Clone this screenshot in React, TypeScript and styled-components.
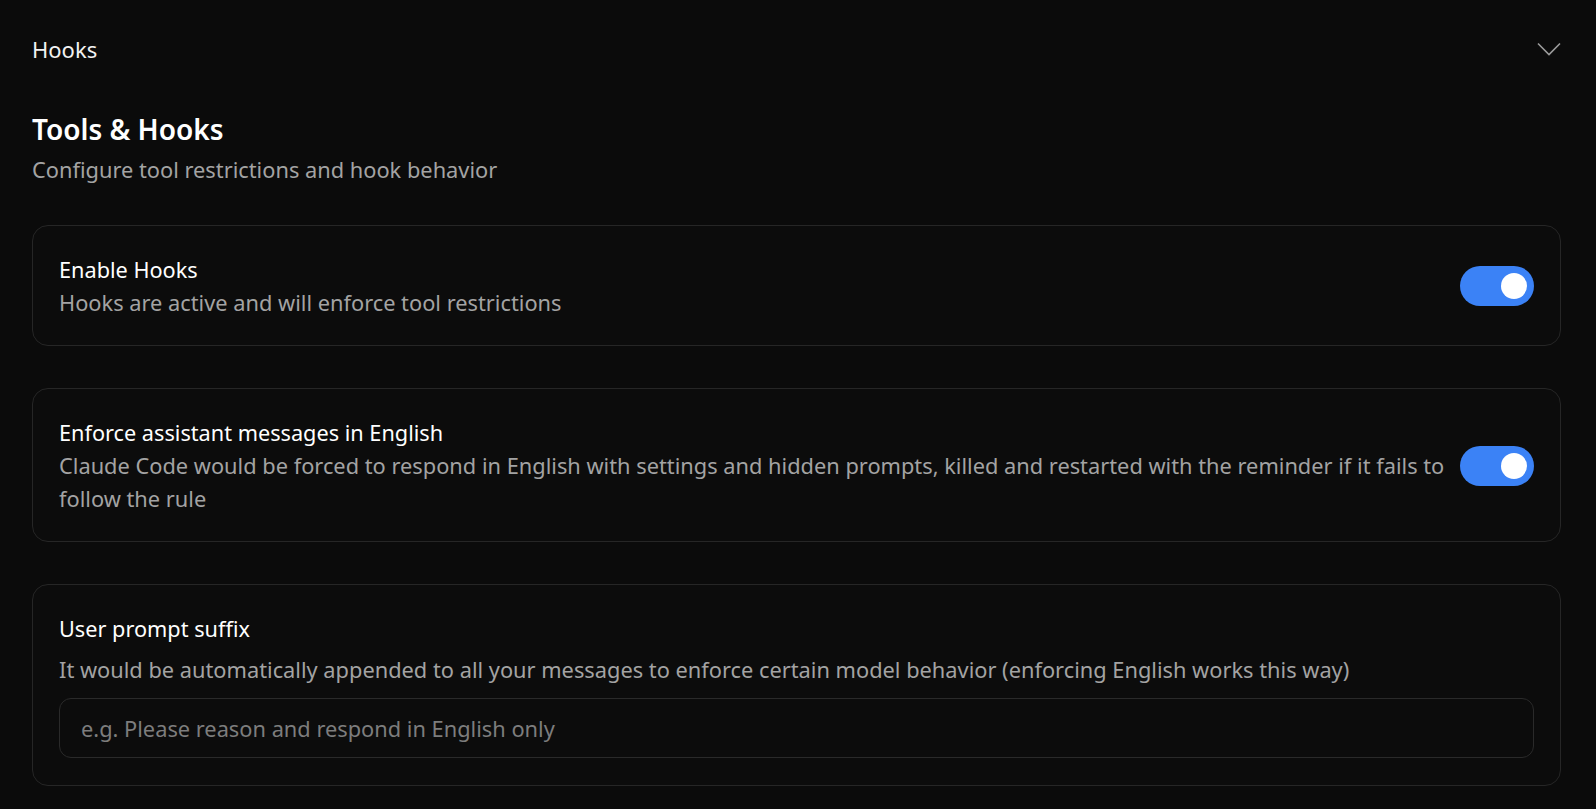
import { useState } from 'react'
import styled, { createGlobalStyle } from 'styled-components'

const GlobalStyle = createGlobalStyle`
  html, body {
    margin: 0;
    padding: 0;
    background: #0b0b0b;
  }
  body {
    font-family: 'Noto Sans', 'Open Sans', sans-serif;
    color: #f5f5f5;
  }
`

const Page = styled.div`
  padding: 34px 35px 24px 32px;
  min-height: 809px;
  box-sizing: border-box;
  background: #0b0b0b;
`

const SectionHeader = styled.div`
  display: flex;
  align-items: center;
  justify-content: space-between;
  height: 30px;
  font-size: 22px;
  line-height: 30px;
  color: #f2f2f2;
`

const Chevron = styled.svg`
  width: 24px;
  height: 14px;
  color: #9c9c9c;
`

const Intro = styled.div`
  margin-top: 47px;
  margin-bottom: 39px;
`

const Title = styled.h1`
  margin: 0;
  font-size: 28px;
  line-height: 36px;
  font-weight: 600;
  color: #ffffff;
`

const Subtitle = styled.p`
  margin: 6px 0 0;
  font-size: 21.8px;
  line-height: 33px;
  color: #a3a3a3;
`

const Stack = styled.div`
  display: flex;
  flex-direction: column;
  gap: 42px;
`

const Card = styled.div`
  display: flex;
  align-items: center;
  gap: 6px;
  padding: 27px 26px 26px;
  border: 1px solid #262626;
  border-radius: 16px;
  background: #0c0c0c;
`

const InputCard = styled.div`
  display: flex;
  flex-direction: column;
  padding: 27px 26px 27px;
  border: 1px solid #262626;
  border-radius: 16px;
  background: #0c0c0c;
`

const CardText = styled.div`
  flex: 1;
  min-width: 0;
`

const CardTitle = styled.div`
  font-size: 21.7px;
  line-height: 33px;
  font-weight: 400;
  color: #ffffff;
`

const CardDesc = styled.div<{ spaced?: boolean }>`
  margin-top: ${props => (props.spaced ? '8px' : '0')};
  font-size: 21.8px;
  line-height: 33px;
  color: #a3a3a3;
`

const Toggle = styled.button<{ on: boolean }>`
  position: relative;
  flex-shrink: 0;
  width: 74px;
  height: 40px;
  padding: 0;
  border: none;
  border-radius: 20px;
  background: ${props => (props.on ? '#3b82f6' : '#3a3a3a')};
  cursor: pointer;

  &::after {
    content: '';
    position: absolute;
    top: 7px;
    left: ${props => (props.on ? '41px' : '7px')};
    width: 26px;
    height: 26px;
    border-radius: 50%;
    background: #ffffff;
  }
`

const TextInput = styled.input`
  margin-top: 12px;
  height: 60px;
  box-sizing: border-box;
  padding: 0 21px;
  border: 1px solid #2a2a2a;
  border-radius: 12px;
  background: #0c0c0c;
  font-family: inherit;
  font-size: 21.8px;
  color: #f5f5f5;
  outline: none;

  &::placeholder {
    color: #7d7d7d;
  }
`

export default function App() {
  const [hooks, setHooks] = useState(true)
  const [english, setEnglish] = useState(true)

  return (
    <>
      <GlobalStyle />
      <Page>
        <SectionHeader>
          <span>Hooks</span>
          <Chevron viewBox="0 0 24 14" fill="none">
            <polyline points="1,1.5 12,12.5 23,1.5" stroke="currentColor" strokeWidth="1.6" />
          </Chevron>
        </SectionHeader>

        <Intro>
          <Title>Tools &amp; Hooks</Title>
          <Subtitle>Configure tool restrictions and hook behavior</Subtitle>
        </Intro>

        <Stack>
          <Card>
            <CardText>
              <CardTitle>Enable Hooks</CardTitle>
              <CardDesc>Hooks are active and will enforce tool restrictions</CardDesc>
            </CardText>
            <Toggle on={hooks} onClick={() => setHooks(!hooks)} aria-label="Enable Hooks" />
          </Card>

          <Card>
            <CardText>
              <CardTitle>Enforce assistant messages in English</CardTitle>
              <CardDesc>
                Claude Code would be forced to respond in English with settings and hidden prompts,
                killed and restarted with the reminder if it fails to follow the rule
              </CardDesc>
            </CardText>
            <Toggle on={english} onClick={() => setEnglish(!english)} aria-label="Enforce English" />
          </Card>

          <InputCard>
            <CardTitle>User prompt suffix</CardTitle>
            <CardDesc spaced>
              It would be automatically appended to all your messages to enforce certain model behavior
              (enforcing English works this way)
            </CardDesc>
            <TextInput placeholder="e.g. Please reason and respond in English only" />
          </InputCard>
        </Stack>
      </Page>
    </>
  )
}
